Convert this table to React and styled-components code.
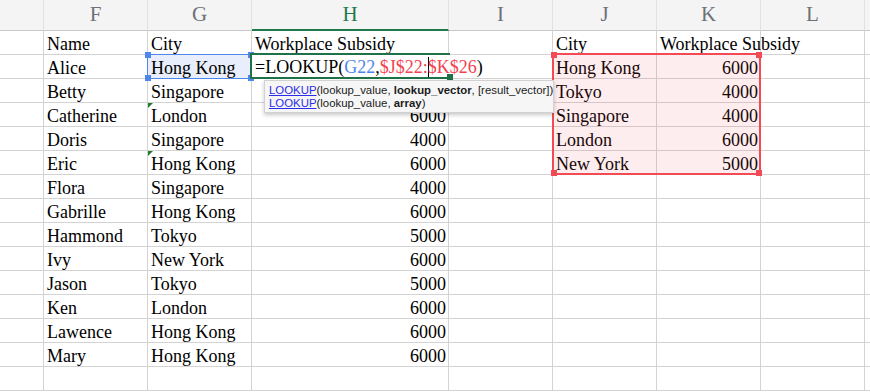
import styled, { createGlobalStyle, css } from 'styled-components';

const GlobalStyle = createGlobalStyle`
  html, body {
    margin: 0;
    padding: 0;
    background: #fff;
    overflow: hidden;
  }
`;

const GRID = '#d3d3d3';

const columns = ['', 'F', 'G', 'H', 'I', 'J', 'K', 'L', ''];

// the Betty subsidy sits under the formula hint, so it is left blank here
const people = [
  ['Name', 'City', 'Workplace Subsidy'],
  ['Alice', 'Hong Kong', ''],
  ['Betty', 'Singapore', ''],
  ['Catherine', 'London', '6000'],
  ['Doris', 'Singapore', '4000'],
  ['Eric', 'Hong Kong', '6000'],
  ['Flora', 'Singapore', '4000'],
  ['Gabrille', 'Hong Kong', '6000'],
  ['Hammond', 'Tokyo', '5000'],
  ['Ivy', 'New York', '6000'],
  ['Jason', 'Tokyo', '5000'],
  ['Ken', 'London', '6000'],
  ['Lawence', 'Hong Kong', '6000'],
  ['Mary', 'Hong Kong', '6000'],
  ['', '', ''],
];

const lookup = [
  ['City', 'Workplace Subsidy'],
  ['Hong Kong', '6000'],
  ['Tokyo', '4000'],
  ['Singapore', '4000'],
  ['London', '6000'],
  ['New York', '5000'],
];

// rows whose city cell carries the little green error marker
const flagged = [3, 5];

const Sheet = styled.div`
  position: relative;
  display: grid;
  grid-template-columns: 44px 104px 104px 197px 104px 104px 104px 104px 1fr;
  grid-template-rows: 31px;
  grid-auto-rows: 24px;
  font-family: 'Liberation Serif', 'Times New Roman', serif;
`;

const HeadCell = styled.div`
  box-sizing: border-box;
  background: #f4f4f4;
  border-right: 1px solid #e1e1e1;
  border-bottom: 1px solid #c8c8c8;
  text-align: center;
  font-size: 21px;
  line-height: 29px;
  color: #6c7179;

  ${(p) =>
    p.$active &&
    css`
      color: #1f7a4b;
      border-bottom: 2px solid #1f7a4b;
    `}
`;

const Cell = styled.div`
  position: relative;
  box-sizing: border-box;
  border-right: 1px solid ${GRID};
  border-bottom: 1px solid ${GRID};
  padding: 2px 2px 0 3px;
  font-size: 18px;
  line-height: 22px;
  color: #000;
  white-space: nowrap;
  text-align: ${(p) => (p.$num ? 'right' : 'left')};
  background: ${(p) => (p.$selected ? '#e8eefb' : 'transparent')};

  ${(p) =>
    p.$flag &&
    css`
      &::before {
        content: '';
        position: absolute;
        top: 0;
        left: 0;
        border-top: 5px solid #1d7b33;
        border-right: 5px solid transparent;
      }
    `}
`;

const Selection = styled.div`
  position: absolute;
  left: 147px;
  top: 54px;
  width: 105px;
  height: 25px;
  box-sizing: border-box;
  border: 1px solid #4f86ec;
  pointer-events: none;
`;

const EditArea = styled.div`
  position: absolute;
  left: 252px;
  top: 55px;
  width: 230px;
  height: 22px;
  background: #fff;
  padding: 1px 0 0 3px;
  box-sizing: border-box;
  font-size: 18px;
  line-height: 22px;
  white-space: nowrap;
  color: #000;
`;

const EditFrame = styled.div`
  position: absolute;
  left: 250px;
  top: 53px;
  width: 200px;
  height: 26px;
  box-sizing: border-box;
  border: 2px solid #1f7147;
  border-right: none;
`;

const Ref = styled.span`
  color: ${(p) => (p.$tone === 'blue' ? '#4f86ec' : '#f2434f')};
`;

const Caret = styled.span`
  display: inline-block;
  width: 1px;
  height: 22px;
  margin-right: -1px;
  background: #000;
  vertical-align: -6px;
`;

const RangeBox = styled.div`
  position: absolute;
  left: 552px;
  top: 53px;
  width: 209px;
  height: 122px;
  box-sizing: border-box;
  border: 2px solid #f34b56;
  background: rgba(243, 75, 86, 0.1);
  pointer-events: none;
`;

const handleSpots = {
  tl: css`top: -3px; left: -3px;`,
  tr: css`top: -3px; right: -3px;`,
  bl: css`bottom: -3px; left: -3px;`,
  br: css`bottom: -3px; right: -3px;`,
};

const Handle = styled.span`
  position: absolute;
  width: 6px;
  height: 6px;
  background: ${(p) => p.$color};
  ${(p) => handleSpots[p.$at]}
`;

const Tooltip = styled.div`
  position: absolute;
  left: 264px;
  top: 80px;
  width: 290px;
  height: 33px;
  box-sizing: border-box;
  padding: 3px 0 0 4px;
  background: #f6f6f6;
  border: 1px solid #d2d2d2;
  box-shadow: 0 2px 4px rgba(0, 0, 0, 0.22);
  font-family: 'Liberation Sans', Arial, sans-serif;
  font-size: 11.4px;
  line-height: 13.4px;
  color: #1c1c1c;
  white-space: nowrap;

  b {
    font-weight: bold;
  }
`;

const FnLink = styled.span`
  color: #2b2ee8;
  text-decoration: underline;
`;

const Handles = ({ color }) => (
  <>
    {['tl', 'tr', 'bl', 'br'].map((at) => (
      <Handle key={at} $at={at} $color={color} />
    ))}
  </>
);

const App = () => {
  return (
    <>
      <GlobalStyle />
      <Sheet>
        {columns.map((c, i) => (
          <HeadCell key={'h' + i} $active={c === 'H'}>
            {c}
          </HeadCell>
        ))}

        {people.map((row, r) => {
          const table = lookup[r] || ['', ''];
          const isHead = r === 0;
          return [
            <Cell key={r + 'a'} />,
            <Cell key={r + 'f'}>{row[0]}</Cell>,
            <Cell key={r + 'g'} $selected={r === 1} $flag={flagged.includes(r)}>
              {row[1]}
            </Cell>,
            <Cell key={r + 'h'} $num={!isHead}>
              {row[2]}
            </Cell>,
            <Cell key={r + 'i'} />,
            <Cell key={r + 'j'}>{table[0]}</Cell>,
            <Cell key={r + 'k'} $num={!isHead}>
              {table[1]}
            </Cell>,
            <Cell key={r + 'l'} />,
            <Cell key={r + 'm'} />,
          ];
        })}

        <Selection>
          <Handles color="#4f86ec" />
        </Selection>

        <RangeBox>
          <Handles color="#f34b56" />
        </RangeBox>

        <EditArea>
          =LOOKUP(<Ref $tone="blue">G22</Ref>,<Ref>$J$22:</Ref>
          <Caret />
          <Ref>$K$26</Ref>)
        </EditArea>
        <EditFrame>
          <Handle $at="br" $color="#1f7147" />
        </EditFrame>

        <Tooltip>
          <div>
            <FnLink>LOOKUP</FnLink>(lookup_value, <b>lookup_vector</b>, [result_vector])
          </div>
          <div>
            <FnLink>LOOKUP</FnLink>(lookup_value, <b>array</b>)
          </div>
        </Tooltip>
      </Sheet>
    </>
  );
};

export default App;
